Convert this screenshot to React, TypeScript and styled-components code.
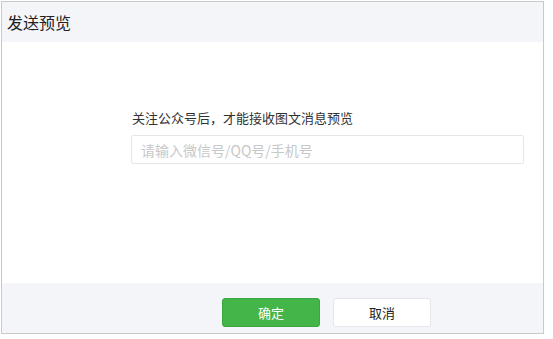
import React from "react";
import styled, { createGlobalStyle } from "styled-components";

const Global = createGlobalStyle`
  html, body { margin: 0; padding: 0; background: #fff; }
  body { font-family: "Noto Sans CJK SC", "Noto Sans", sans-serif; }
  * { box-sizing: border-box; }
`;

const Dialog = styled.div`
  margin: 1px 0 0 1px;
  width: 543px;
  height: 333px;
  border: 1px solid #c9c9cc;
  display: flex;
  flex-direction: column;
  background: #fff;
`;

const Header = styled.div`
  height: 40px;
  background: #f4f5f9;
  display: flex;
  align-items: center;
  padding-left: 5px;
  font-size: 16px;
  color: #222;
`;

const Body = styled.div`
  flex: 1;
  display: flex;
  flex-direction: column;
  padding: 66px 0 0 129px;
`;

const Label = styled.div`
  font-size: 13px;
  color: #333;
  line-height: 20px;
  margin-left: 1px;
`;

const Input = styled.input`
  margin-top: 7px;
  width: 393px;
  height: 29px;
  border: 1px solid #e4e6ea;
  border-radius: 2px;
  padding: 0 9px;
  font-family: inherit;
  font-size: 14px;
  outline: none;
  &::placeholder { color: #c8c8c8; }
`;

const Footer = styled.div`
  height: 50px;
  background: #f4f5f9;
  display: flex;
  justify-content: flex-start;
  align-items: flex-start;
  padding: 15px 0 0 220px;
  gap: 13px;
`;

const Button = styled.button<{ $primary?: boolean }>`
  width: 98px;
  height: 29px;
  border-radius: 3px;
  border: 1px solid ${(p) => (p.$primary ? "#3aa63f" : "#e4e6ea")};
  background: ${(p) => (p.$primary ? "#44b549" : "#fff")};
  color: ${(p) => (p.$primary ? "#fff" : "#222")};
  font-family: inherit;
  font-size: 13px;
  padding: 0;
`;

export default function App() {
  return (
    <>
      <Global />
      <Dialog>
        <Header>发送预览</Header>
        <Body>
          <Label>关注公众号后，才能接收图文消息预览</Label>
          <Input placeholder="请输入微信号/QQ号/手机号" />
        </Body>
        <Footer>
          <Button $primary>确定</Button>
          <Button>取消</Button>
        </Footer>
      </Dialog>
    </>
  );
}
